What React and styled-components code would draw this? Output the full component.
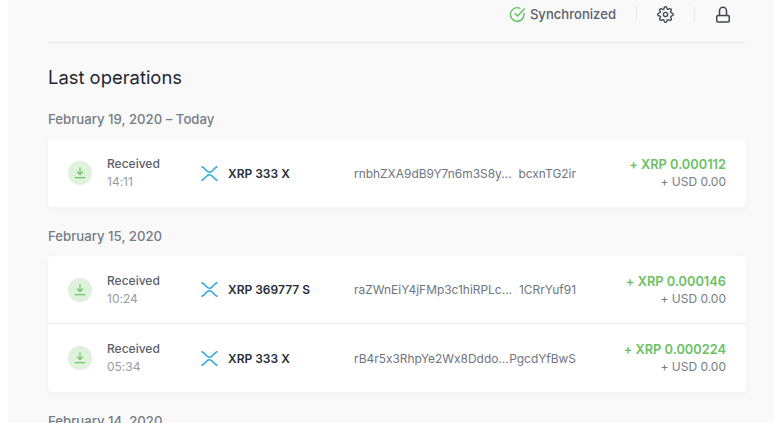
import React from 'react';
import styled, { createGlobalStyle } from 'styled-components';

const GlobalStyle = createGlobalStyle`
  html, body {
    margin: 0;
    height: 100%;
    overflow: hidden;
    background: #fff;
    font-family: Inter, "Liberation Sans", sans-serif;
    font-feature-settings: "calt" 0;
  }
`

const groups = [
  {
    date: 'February 19, 2020 – Today',
    rows: [
      { time: '14:11', account: 'XRP 333 X', head: 'rnbhZXA9dB9Y7n6m3S8y...', tail: 'bcxnTG2ir', amount: '+ XRP 0.000112' },
    ],
  },
  {
    date: 'February 15, 2020',
    rows: [
      { time: '10:24', account: 'XRP 369777 S', head: 'raZWnEiY4jFMp3c1hiRPLc...', tail: '1CRrYuf91', amount: '+ XRP 0.000146' },
      { time: '05:34', account: 'XRP 333 X', head: 'rB4r5x3RhpYe2Wx8Dddo...', tail: 'PgcdYfBwS', amount: '+ XRP 0.000224' },
    ],
  },
  { date: 'February 14, 2020', rows: [] },
]

function CheckIcon() {
  return (
    <svg width="17" height="17" viewBox="0 0 17 17" fill="none" stroke="#62c45c" strokeWidth="1.4" strokeLinecap="round" strokeLinejoin="round">
      <path d="M15 7.3V8.5a6.8 6.8 0 1 1-4-6.2" />
      <path d="M15.2 3 8.5 10 6 7.6" />
    </svg>
  )
}

function GearIcon() {
  return (
    <svg width="17" height="17" viewBox="0 0 24 24" fill="none" stroke="#3f4652" strokeWidth="1.9" strokeLinecap="round" strokeLinejoin="round">
      <circle cx="12" cy="12" r="3" />
      <path d="M19.4 15a1.65 1.65 0 0 0 .33 1.82l.06.06a2 2 0 1 1-2.83 2.83l-.06-.06a1.65 1.65 0 0 0-2.82 1.17V21a2 2 0 1 1-4 0v-.09a1.65 1.65 0 0 0-2.82-1.17l-.06.06a2 2 0 1 1-2.83-2.83l.06-.06A1.65 1.65 0 0 0 3.26 14H3a2 2 0 1 1 0-4h.09a1.65 1.65 0 0 0 1.17-2.82l-.06-.06a2 2 0 1 1 2.83-2.83l.06.06A1.65 1.65 0 0 0 10 3.17V3a2 2 0 1 1 4 0v.09a1.65 1.65 0 0 0 2.82 1.17l.06-.06a2 2 0 1 1 2.83 2.83l-.06.06A1.65 1.65 0 0 0 20.83 10H21a2 2 0 1 1 0 4h-.09a1.65 1.65 0 0 0-1.51 1z" />
    </svg>
  )
}

function LockIcon() {
  return (
    <svg width="16" height="17" viewBox="0 0 16 17" fill="none" stroke="#3f4652" strokeWidth="1.5" strokeLinecap="round" strokeLinejoin="round">
      <rect x="1.75" y="9.5" width="12.5" height="6.5" rx="1.2" />
      <path d="M4.5 9.5V4.700a3.500 3.500 0 0 1 7 0v4.800" />
    </svg>
  )
}

function DownloadIcon() {
  return (
    <svg width="12" height="12" viewBox="0 0 12 12" fill="none" stroke="#6cc667" strokeWidth="1.2" strokeLinecap="round" strokeLinejoin="round">
      <path d="M6 .7v6.700M3.400 5 6 7.600 8.600 5" />
      <path d="M1.200 10.600h9.600" />
    </svg>
  )
}

function XrpIcon() {
  return (
    <svg width="17" height="15" viewBox="0 0 17 15" fill="none" stroke="#2aa6e0" strokeWidth="1.5" strokeLinecap="round">
      <path d="M1 .8c2.400 1 3.500 3 4.800 4.200 1.500 1.400 3.900 1.400 5.400 0C12.500 3.800 13.600 1.800 16 .8" />
      <path d="M1 14.200c2.400-1 3.500-3 4.800-4.200 1.500-1.400 3.900-1.400 5.400 0 1.300 1.200 2.400 3.200 4.800 4.200" />
    </svg>
  )
}

function Operation({ row }) {
  return (
    <Row>
      <Badge><DownloadIcon /></Badge>
      <TypeCol>
        <TypeLabel>Received</TypeLabel>
        <Time>{row.time}</Time>
      </TypeCol>
      <AccountCol>
        <XrpIcon />
        <AccountName>{row.account}</AccountName>
      </AccountCol>
      <Address>
        <span>{row.head}</span>
        <span>{row.tail}</span>
      </Address>
      <AmountCol>
        <Amount>{row.amount}</Amount>
        <Fiat>+ USD 0.00</Fiat>
      </AmountCol>
    </Row>
  )
}

export default function App() {
  return (
    <Page>
      <GlobalStyle />
      <Panel>
        <TopBar>
          <Status>
            <CheckIcon />
            <StatusText>Synchronized</StatusText>
          </Status>
          <Divider />
          <IconButton><GearIcon /></IconButton>
          <Divider />
          <IconButton><LockIcon /></IconButton>
        </TopBar>
        <Title>Last operations</Title>
        {groups.map((group) => (
          <Group key={group.date}>
            <DateLabel>{group.date}</DateLabel>
            {group.rows.length > 0 && (
              <Card>
                {group.rows.map((row) => (
                  <Operation key={row.time} row={row} />
                ))}
              </Card>
            )}
          </Group>
        ))}
      </Panel>
    </Page>
  )
}

const Page = styled.div`
  height: 423px;
  overflow: hidden;
  padding-left: 8px;
  box-sizing: border-box;
`
const Panel = styled.div`
  height: 100%;
  background: #f9f9fa;
  padding: 0 28px 0 40px;
`
const TopBar = styled.div`
  height: 43px;
  box-sizing: border-box;
  display: flex;
  align-items: center;
  justify-content: flex-end;
  gap: 20px;
  border-bottom: 1px solid #e4e6e8;
  padding: 0 15px 14px 0;
`
const Status = styled.div`
  display: flex;
  align-items: center;
  gap: 4px;
`
const StatusText = styled.span`
  font-size: 13.1px;
  font-weight: 500;
  color: #5a616c;
`
const Divider = styled.div`
  width: 1px;
  height: 14px;
  background: #e6e8ea;
`
const IconButton = styled.div`
  display: flex;
`
const Title = styled.h1`
  margin: 23px 0 0;
  font-size: 18.4px;
  line-height: 22px;
  font-weight: 400;
  color: #1f2733;
`
const Group = styled.section`
  margin-top: 21px;
  & + & {
    margin-top: 19px;
  }
`
const DateLabel = styled.div`
  font-size: 13.2px;
  line-height: 20px;
  font-weight: 500;
  color: #767c86;
  margin-bottom: 10px;
`
const Card = styled.div`
  background: #fff;
  border-radius: 4px;
  box-shadow: 0 2px 6px rgba(30, 40, 60, 0.04);
`
const Row = styled.div`
  height: 68px;
  box-sizing: border-box;
  display: flex;
  align-items: center;
  padding: 0 20px;
  &:not(:last-child) {
    border-bottom: 1px solid #e6e8ea;
  }
`
const Badge = styled.div`
  width: 24px;
  height: 24px;
  border-radius: 50%;
  background: #dff2dc;
  display: flex;
  align-items: center;
  justify-content: center;
  flex: none;
`
const TypeCol = styled.div`
  width: 94px;
  margin-left: 15px;
  display: flex;
  flex-direction: column;
  gap: 2px;
  font-size: 12px;
  line-height: 16px;
`
const TypeLabel = styled.span`
  font-weight: 500;
  color: #59606b;
`
const Time = styled.span`
  color: #979ca4;
`
const AccountCol = styled.div`
  width: 153px;
  display: flex;
  align-items: center;
  gap: 10px;
`
const AccountName = styled.span`
  font-size: 12px;
  font-weight: 600;
  color: #262d39;
`
const Address = styled.div`
  width: 222px;
  display: flex;
  justify-content: space-between;
  font-size: 11.95px;
  color: #6f757f;
`
const AmountCol = styled.div`
  flex: 1;
  display: flex;
  flex-direction: column;
  align-items: flex-end;
  gap: 1px;
`
const Amount = styled.span`
  font-size: 12.8px;
  line-height: 17px;
  font-weight: 600;
  color: #6cc164;
`
const Fiat = styled.span`
  font-size: 12px;
  line-height: 16px;
  color: #767c86;
`
